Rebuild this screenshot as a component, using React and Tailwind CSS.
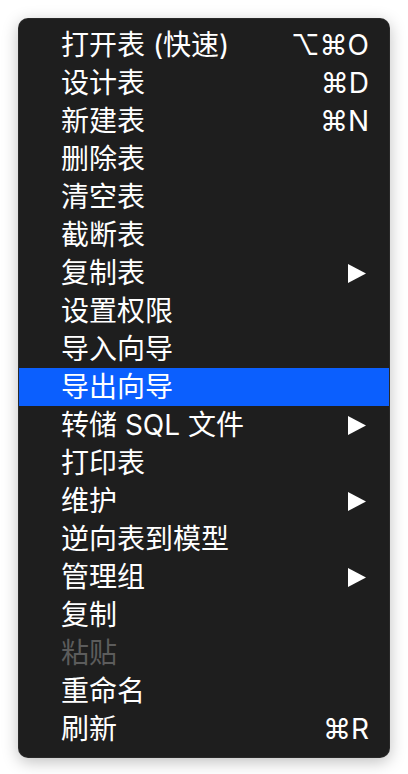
import React from "react";

const items = [
  { label: "打开表 (快速)", shortcut: "⌥⌘O" },
  { label: "设计表", shortcut: "⌘D" },
  { label: "新建表", shortcut: "⌘N" },
  { label: "删除表" },
  { label: "清空表" },
  { label: "截断表" },
  { label: "复制表", submenu: true },
  { label: "设置权限" },
  { label: "导入向导" },
  { label: "导出向导", active: true },
  { label: "转储 SQL 文件", submenu: true },
  { label: "打印表" },
  { label: "维护", submenu: true },
  { label: "逆向表到模型" },
  { label: "管理组", submenu: true },
  { label: "复制" },
  { label: "粘贴", disabled: true },
  { label: "重命名" },
  { label: "刷新", shortcut: "⌘R" },
];

const Arrow = () => (
  <svg width="18" height="19" viewBox="0 0 18 19" className="mr-[3px]">
    <path d="M0 0 L18 9.5 L0 19 Z" fill="currentColor" />
  </svg>
);

const App = () => {
  return (
    <div className="w-[408px] h-[774px] bg-white p-[18px]">
      <div
        className="rounded-[10px] bg-[#1e1e1e] pt-[7px] pb-[9px] shadow-[0_4px_16px_rgba(0,0,0,0.25)] border border-[#3a3a3a]/40 overflow-hidden"
        style={{ fontFamily: 'Inter, "Noto Sans CJK SC", sans-serif' }}
      >
        {items.map((item) => (
          <div
            key={item.label}
            className={`h-[38px] flex items-center justify-between pl-[42px] pr-[20px] text-[28px] font-normal leading-none ${
              item.active ? "bg-[#0b5ffe] text-white" : ""
            } ${item.disabled ? "text-[#5c5c5c]" : "text-white"}`}
          >
            <span className="whitespace-nowrap">{item.label}</span>
            {item.shortcut && (
              <span className="whitespace-nowrap">{item.shortcut}</span>
            )}
            {item.submenu && <Arrow />}
          </div>
        ))}
      </div>
    </div>
  );
};

export default App;
